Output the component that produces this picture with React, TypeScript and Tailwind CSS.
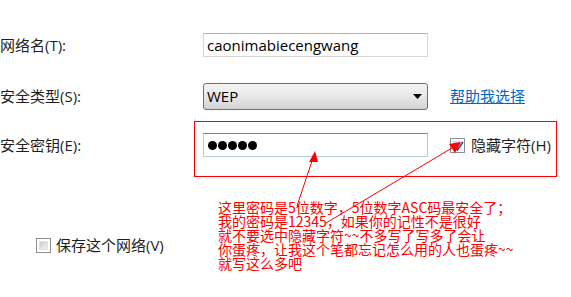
import React from 'react';

const uiFont = { fontFamily: '"Open Sans", "Noto Sans CJK SC", sans-serif' };

const Checkbox: React.FC<{ checked?: boolean }> = ({ checked }) => (
  <span className="relative inline-flex w-[15px] h-[15px] border border-[#8f8f8f] bg-white p-[2px]">
    <span className="block w-full h-full bg-gradient-to-br from-[#cbcbcb] to-[#f6f6f6] border border-[#e0e0e0]" />
    {checked && (
      <svg className="absolute inset-0" width="15" height="15" viewBox="0 0 15 15">
        <path d="M4 8 L6.5 11 L12 3" fill="none" stroke="#3a4f8a" strokeWidth="1.6" />
      </svg>
    )}
  </span>
);

const Label: React.FC<{ children: React.ReactNode }> = ({ children }) => (
  <div className="w-[203px] text-[15px] text-[#1e1e1e]">{children}</div>
);

export default function App() {
  return (
    <div className="relative w-[571px] h-[297px] bg-white overflow-hidden" style={uiFont}>
      <div className="flex flex-col pt-[33px]">
        <div className="flex items-center h-[24px]">
          <Label>网络名(T):</Label>
          <div className="w-[225px] h-[24px] border border-[#d5d5d5] border-t-[#b5b5b5] flex items-center px-[3px] text-[15px] text-black">
            caonimabiecengwang
          </div>
        </div>

        <div className="flex items-center h-[27px] mt-[26px]">
          <Label>安全类型(S):</Label>
          <div className="w-[225px] h-[27px] border border-[#707070] rounded-[3px] bg-gradient-to-b from-[#f3f3f3] via-[#e8e8e8] to-[#d2d2d2] flex items-center justify-between pl-[3px] pr-[5px] text-[15px] text-black">
            <span>WEP</span>
            <svg width="9" height="5" viewBox="0 0 9 5">
              <path d="M0 0 H9 L4.5 5 Z" fill="#000" />
            </svg>
          </div>
          <a className="ml-[22px] text-[15px] text-[#0066cc] underline">帮助我选择</a>
        </div>

        <div className="flex items-center h-[24px] mt-[23px]">
          <Label>安全密钥(E):</Label>
          <div className="w-[225px] h-[24px] border border-[#b4cde3] border-t-[#5d88b0] flex items-center gap-[1px] pl-[4px]">
            {[0, 1, 2, 3, 4].map((i) => (
              <span key={i} className="w-[9px] h-[9px] rounded-full bg-black" />
            ))}
          </div>
          <div className="flex items-center ml-[22px] gap-[6px] text-[15px] text-[#1e1e1e]">
            <Checkbox checked />
            <span>隐藏字符(H)</span>
          </div>
        </div>

        <div className="flex items-center gap-[5px] pl-[36px] mt-[77px] text-[15px] text-[#1e1e1e]">
          <Checkbox />
          <span>保存这个网络(V)</span>
        </div>
      </div>

      {/* red annotation box */}
      <div className="absolute left-[194px] top-[121px] w-[363px] h-[56px] border border-[#ff0000]" />

      {/* annotation text */}
      <div
        className="absolute left-[218px] top-[200px] text-[14px] leading-[14px] text-[#ff0000] whitespace-nowrap"
        style={{ fontFamily: '"Noto Sans CJK SC", sans-serif' }}
      >
        <div>这里密码是5位数字，5位数字ASC码最安全了；</div>
        <div>我的密码是12345，如果你的记性不是很好</div>
        <div>就不要选中隐藏字符~~不多写了写多了会让</div>
        <div>你蛋疼，让我这个笔都忘记怎么用的人也蛋疼~~</div>
        <div>就写这么多吧</div>
      </div>

      {/* arrows */}
      <svg className="absolute inset-0 pointer-events-none" width="571" height="297" viewBox="0 0 571 297">
        <line x1="297" y1="206" x2="313" y2="158" stroke="#ff0000" strokeWidth="1" />
        <path d="M315 151 L309 162 L318 162 Z" fill="#ff0000" />
        <line x1="326" y1="223" x2="452" y2="148" stroke="#ff0000" strokeWidth="1" />
        <path d="M461 142 L449 144 L455 153 Z" fill="#ff0000" />
      </svg>
    </div>
  );
}
